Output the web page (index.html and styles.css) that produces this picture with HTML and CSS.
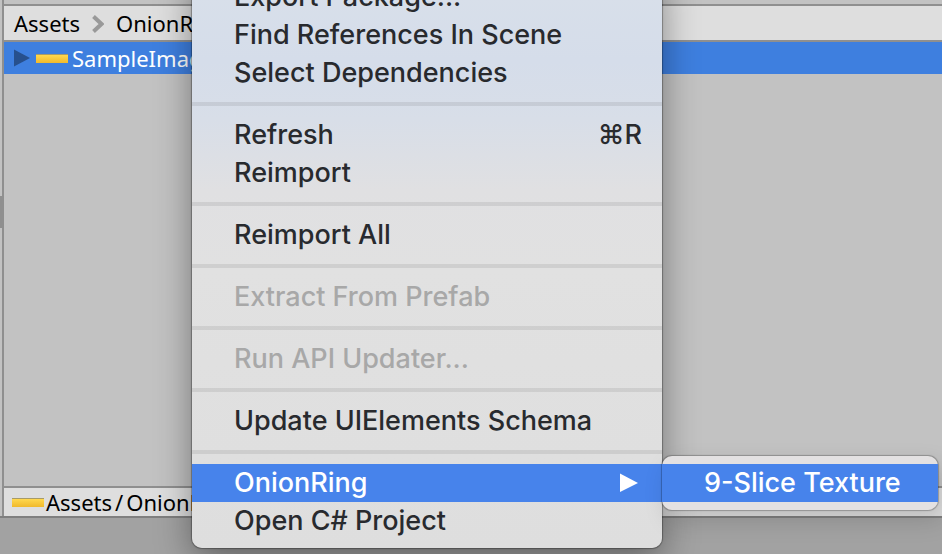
FILE: index.html
```html
<!DOCTYPE html>
<html lang="en">
<head>
<meta charset="utf-8">
<title>Project</title>
<link rel="stylesheet" href="styles.css">
</head>
<body>
<main class="window">
  <div class="gutter"><div class="gutter-thumb"></div></div>
  <section class="panel">
    <nav class="crumbs" aria-label="Folder path">
      <a href="#">Assets</a>
      <svg class="chevron" viewBox="0 0 12 18" aria-hidden="true"><path d="M1.500 1.500 9.500 9 1.500 16.500" /></svg>
      <a href="#">OnionRing</a>
    </nav>
    <div class="asset-row">
      <svg class="disclosure" viewBox="0 0 16 18" aria-hidden="true"><path d="M0 0.500 16 9 0 17.500z"/></svg>
      <span class="thumb"></span>
      <span>SampleImage</span>
    </div>
    <div class="assets"></div>
    <footer class="path">
      <span class="thumb"></span>
      <span>Assets<span class="slash">/</span>OnionRing</span>
    </footer>
  </section>
</main>

<ul class="menu main-menu">
  <li><button type="button">Export Package...</button></li>
  <li><button type="button">Find References In Scene</button></li>
  <li><button type="button">Select Dependencies</button></li>
  <li class="separator"></li>
  <li><button type="button">Refresh <kbd>⌘R</kbd></button></li>
  <li><button type="button">Reimport</button></li>
  <li class="separator"></li>
  <li><button type="button">Reimport All</button></li>
  <li class="separator"></li>
  <li><button type="button" disabled>Extract From Prefab</button></li>
  <li class="separator"></li>
  <li><button type="button" disabled>Run API Updater...</button></li>
  <li class="separator"></li>
  <li><button type="button">Update UIElements Schema</button></li>
  <li class="separator"></li>
  <li class="has-submenu">
    <button type="button" class="selected" aria-haspopup="true" aria-expanded="true">OnionRing
      <svg class="arrow" viewBox="0 0 18 20" aria-hidden="true"><path d="M0 1.500 18 11 0 20z"/></svg>
    </button>
    <ul class="menu submenu">
      <li><button type="button" class="selected">9-Slice Texture</button></li>
    </ul>
  </li>
  <li><button type="button">Open C# Project</button></li>
</ul>
</body>
</html>
```

FILE: styles.css
```css
* {
  box-sizing: border-box;
}

body {
  margin: 0;
  height: 100vh;
  overflow: hidden;
  position: relative;
  background: #a2a2a2;
  font-family: "Noto Sans", sans-serif;
  font-size: 22px;
  color: #000;
}

.window {
  display: flex;
  height: calc(100vh - 36px);
  background: #c2c2c2;
  border-bottom: 2px solid #7f7f7f;
}

.gutter {
  width: 4px;
  padding-top: 196px;
  border-right: 2px solid #8f8f8f;
}

.gutter-thumb {
  height: 32px;
  background: #8f8f8f;
}

.panel {
  flex: 1;
  display: flex;
  flex-direction: column;
  margin-top: 4px;
  border-top: 2px solid #8f8f8f;
  white-space: nowrap;
}

.crumbs {
  display: flex;
  align-items: center;
  gap: 12px;
  height: 36px;
  padding-left: 10px;
  background: #dedede;
  border-bottom: 2px solid #8f8f8f;
}

.crumbs a {
  color: inherit;
  text-decoration: none;
}

.chevron {
  width: 12px;
  height: 18px;
  margin-top: 2px;
  fill: none;
  stroke: #999;
  stroke-width: 4;
}

.asset-row {
  display: flex;
  align-items: center;
  gap: 4px;
  height: 32px;
  padding-left: 10px;
  background: #3e7fdf;
  color: #fff;
}

.disclosure {
  width: 16px;
  height: 18px;
  margin-right: 2px;
  fill: #27508d;
}

.thumb {
  width: 32px;
  height: 9px;
  background: linear-gradient(#ffd84f, #f0b92c);
  border-top: 1px solid #a79b68;
}

.assets {
  flex: 1;
}

.path {
  display: flex;
  align-items: center;
  gap: 2px;
  height: 30px;
  padding-left: 8px;
  background: #dedede;
  border-top: 2px solid #8f8f8f;
}

.slash {
  margin: 0 3px;
}

.menu {
  position: absolute;
  margin: 0;
  padding: 8px 0;
  list-style: none;
  font-family: Inter, "DejaVu Sans", sans-serif;
  font-size: 27px;
  font-weight: 450;
  border-radius: 10px;
  white-space: nowrap;
}

.main-menu {
  top: -30px;
  left: 192px;
  width: 470px;
  background: linear-gradient(#d9e0ea 0, #d5ddea 90px, #d8dee8 150px, #e0e0e2 220px, #e1e1e1 300px, #dedede 100%);
  box-shadow: 0 0 1px 1px rgba(0, 0, 0, 0.3), 0 12px 36px rgba(0, 0, 0, 0.4);
}

.menu button {
  display: flex;
  align-items: center;
  justify-content: space-between;
  width: 100%;
  height: 38px;
  padding: 0 20px 2px 42px;
  border: 0;
  background: transparent;
  color: #282a2e;
  font: inherit;
  text-align: left;
}

.menu button:disabled {
  color: #a8a8a8;
}

.menu button.selected {
  background: #4783eb;
  color: #fff;
}

.menu kbd {
  font: inherit;
}

.separator {
  height: 24px;
  padding: 10px 0;
  background: rgba(0, 0, 0, 0.08) content-box;
}

.has-submenu {
  position: relative;
}

.arrow {
  width: 18px;
  height: 20px;
  margin-right: 4px;
  fill: #fff;
}

.submenu {
  top: -8px;
  left: 100%;
  width: 276px;
  background: #e3e1e2;
  box-shadow: 0 0 1px 1px rgba(0, 0, 0, 0.25), 6px 10px 24px rgba(0, 0, 0, 0.15);
}
```
